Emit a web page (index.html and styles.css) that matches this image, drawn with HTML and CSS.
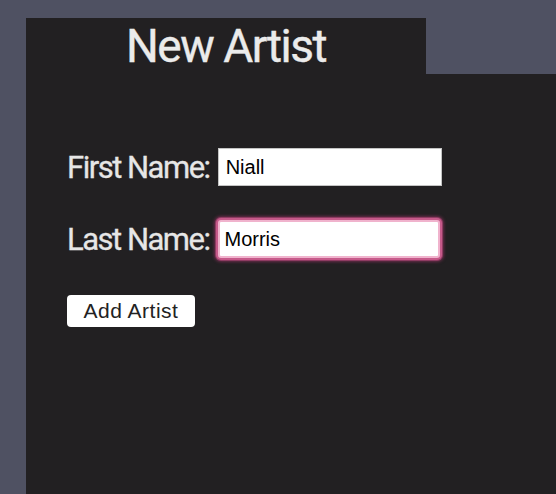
FILE: index.html
```html
<!DOCTYPE html>
<html>
<head>
<meta charset="utf-8">
<link rel="stylesheet" href="styles.css">
</head>
<body>
<div class="page">
  <div class="tab"><h1 class="title">New Artist</h1></div>
  <div class="panel">
    <form class="form">
      <div class="row">
        <label class="label">First Name:</label>
        <input class="field" type="text" value="Niall">
      </div>
      <div class="row">
        <label class="label">Last Name:</label>
        <input class="field focus" type="text" value="Morris">
      </div>
      <button class="btn" type="button">Add Artist</button>
    </form>
  </div>
</div>
</body>
</html>
```
FILE: styles.css
```css
html, body {
  margin: 0;
  padding: 0;
  height: 100%;
}
body {
  background: #4f5162;
  font-family: Roboto, "Liberation Sans", sans-serif;
  overflow: hidden;
}
.page {
  padding: 18px 0 0 26px;
  height: 100%;
  box-sizing: border-box;
  display: flex;
  flex-direction: column;
}
.tab {
  width: 400px;
  height: 56px;
  background: #222022;
  display: flex;
  justify-content: center;
}
.title {
  margin: 0;
  color: #ebebeb;
  font-weight: 400;
  font-size: 46px;
  line-height: 56px;
  letter-spacing: -1.5px;
  -webkit-text-stroke: 0.4px #ebebeb;
}
.panel {
  flex: 1;
  background: #222022;
  padding: 74px 0 0 41px;
}
.form {
  display: flex;
  flex-direction: column;
  align-items: flex-start;
}
.row {
  display: flex;
  align-items: center;
  gap: 8px;
  height: 38px;
  margin-bottom: 34px;
}
.label {
  color: #e6e6e6;
  font-size: 31px;
  font-weight: 400;
  letter-spacing: -1.5px;
  -webkit-text-stroke: 0.3px #e6e6e6;
}
.field {
  width: 224px;
  height: 38px;
  box-sizing: border-box;
  border: 1px solid #c4c4c4;
  padding: 0 7px;
  font-family: "Liberation Sans", Arial, sans-serif;
  font-size: 20px;
  color: #000;
  background: #fff;
}
.field.focus {
  width: 222px;
  border: 2px solid #f0b3cd;
  outline: none;
  padding: 0 5px;
  box-shadow: 0 0 0 2px #c65a8a, 0 0 0 3px #8e3b62, 0 0 3px 4px #6a2c4a;
  border-radius: 3px;
}
.btn {
  margin-top: 3px;
  width: 128px;
  height: 32px;
  background: #fff;
  border: none;
  border-radius: 4px;
  font-family: "Liberation Sans", Arial, sans-serif;
  font-size: 21px;
  letter-spacing: 0.5px;
  color: #222;
  padding: 0;
}
```
